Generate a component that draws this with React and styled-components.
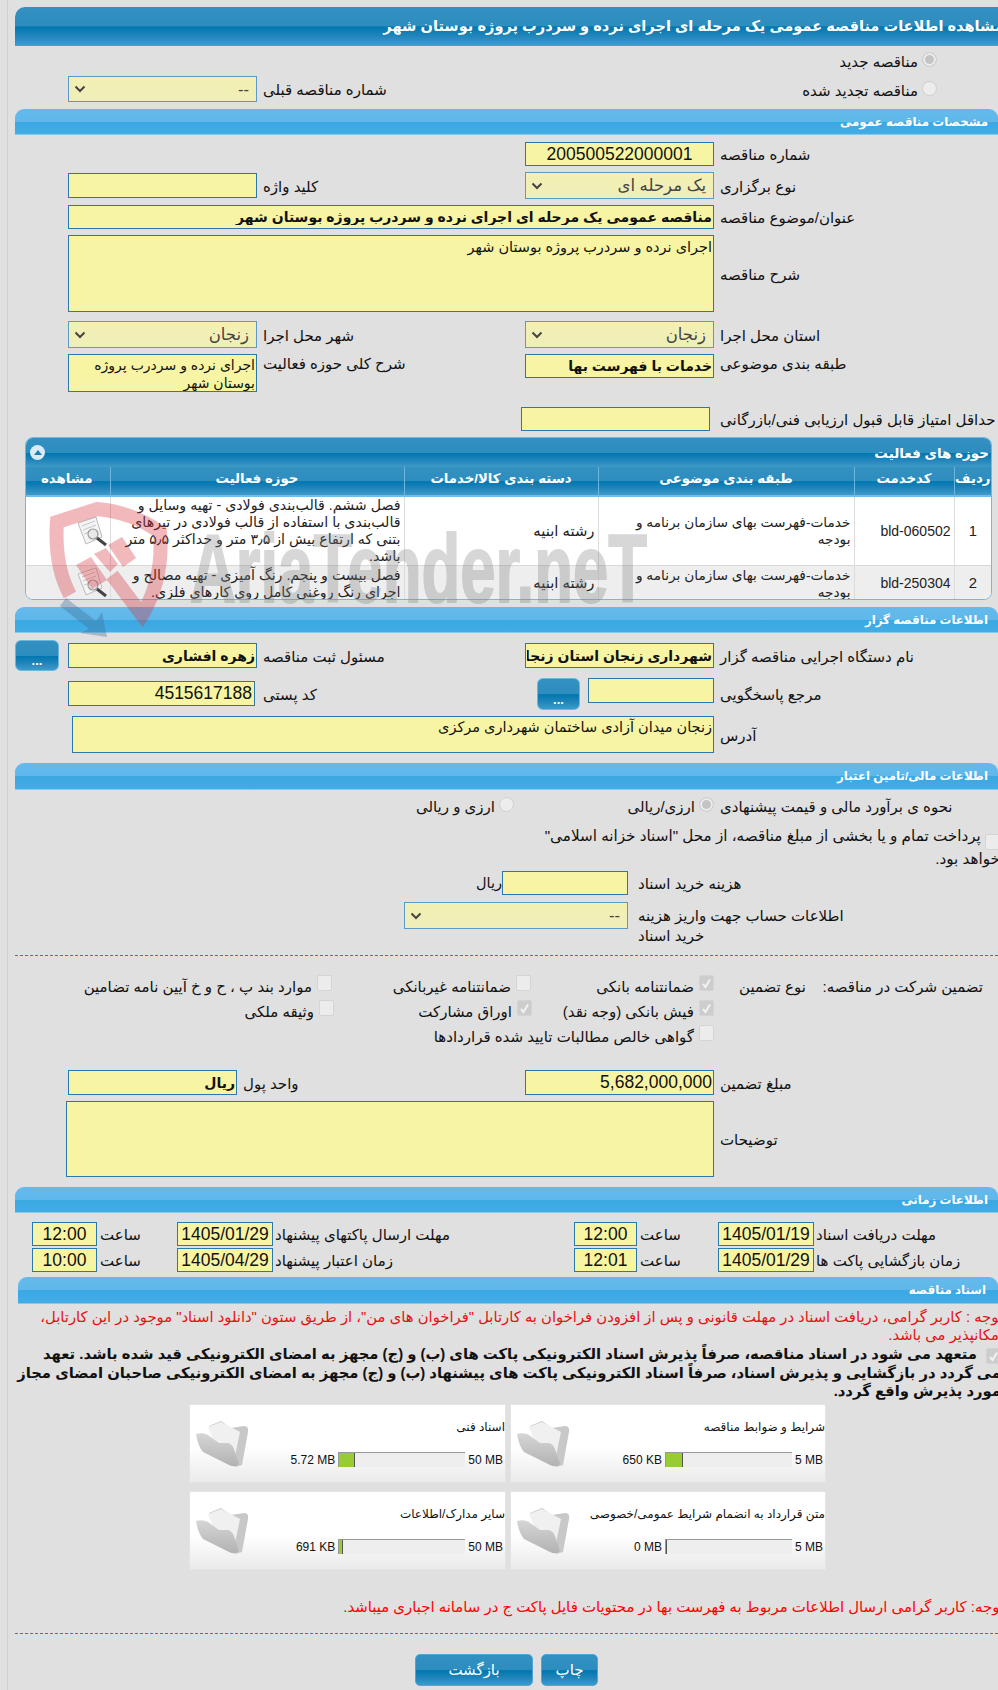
import React from 'react';
import styled, { createGlobalStyle, css } from 'styled-components';

const Global = createGlobalStyle`
  html, body { margin: 0; padding: 0; background: #e0e0e0; }
  * { box-sizing: border-box; }
  body { font-family: "Liberation Sans", "DejaVu Sans", sans-serif; font-size: 15px; color: #111; overflow: hidden; }
`;
const darkBar = css`background: linear-gradient(#3391c1 0, #2d8dbe 50%, #0077b0 52%, #1f84b9 75%, #3f9ac9 100%);`;
const lightBar = css`background: linear-gradient(#64baeb 0, #5fb7ea 50%, #3aa8e3 52%, #43ace5 100%);`;

const Page = styled.div`
  position: relative; width: 998px; height: 1690px; overflow: hidden; padding-left: 8px; direction: rtl; background: #e0e0e0;
`;
const Sheet = styled.div`
  height: 1690px; width: 990px; padding-top: 7px; padding-left: 7px; position: relative;
  box-shadow: -1px 0 0 #cfcfcf;
`;
const TitleBar = styled.div`
  ${darkBar}; height: 39px; border-top-left-radius: 10px; display: flex; align-items: center; overflow: hidden;
  border-bottom: 1px solid #4a9bd0;
  color: #fff; font-weight: bold; font-size: 14.6px; white-space: nowrap;
  span { margin-right: -6px; margin-top: -1px; }
`;
const SectionBar = styled.div`
  ${lightBar}; height: ${p => p.$h || 26}px; border-top-left-radius: 9px; border-top-right-radius: 9px; display: flex; align-items: center; padding-right: ${p => p.$pr || 10}px;
  margin-top: ${p => p.$mt || 0}px; margin-left: ${p => p.$ml || 0}px;
  border-bottom: 1px solid #86c9ef;
  color: #fff; font-weight: bold; font-size: 11.8px;
`;
const Intro = styled.div` height: 63px; padding-top: 6px; `;
const RadioLine = styled.div` display: flex; height: 20px; padding-right: 61px; gap: 4px; font-size: 15px; line-height: 19px; grid-column: ${p => p.$span ? 'span ' + p.$span : 'auto'}; padding-top: ${p => p.$pt || 0}px; `;
const Radio = styled.span`
  flex: none; width: 15px; height: 15px; border-radius: 50%; background: #ededed; border: 1px solid #cfcfcf; margin-top: ${p => p.$mt || 0}px;
  ${p => p.$on && css`box-shadow: inset 0 0 0 2px #ededed; background: #c4c4c4;`}
`;
const Grid = styled.div`
  display: grid; grid-template-columns: ${p => p.$cols || '284px 189px 268px 189px 53px'}; margin-top: ${p => p.$mt || 0}px; height: ${p => p.$h}px;
`;
const Label = styled.label`
  display: flex; align-items: ${p => p.$top ? 'flex-start' : 'center'}; justify-content: flex-end; padding-left: ${p => p.$pl ?? 6}px; white-space: nowrap; font-size: 15px; line-height: 20px;
  padding-top: ${p => p.$top ? 0 : 2}px;
`;
const fieldCss = css`
  display: block; background: #f7f5a3; border: 1px solid #2a78ad; border-radius: 0; padding: 0 1px; margin: 0; color: #111; direction: rtl; outline: none; width: 100%;
  font-family: "Liberation Sans", "DejaVu Sans", sans-serif;
`;
const Input = styled.input`
  ${fieldCss}; height: ${p => p.$h || 24}px; font-size: ${p => p.$fs || 17.5}px; font-weight: ${p => p.$b ? 'bold' : 'normal'};
  text-align: ${p => p.$center ? 'center' : 'right'}; width: ${p => p.$w ? p.$w + 'px' : '100%'};
  margin-top: ${p => p.$mt || 0}px; align-self: start; justify-self: ${p => p.$js || 'stretch'};
  margin-right: ${p => p.$mr || 0}px; padding-right: ${p => p.$pr ?? 1}px; grid-column: ${p => p.$span ? 'span ' + p.$span : 'auto'};
`;
const Area = styled.textarea`
  ${fieldCss}; height: ${p => p.$h}px; resize: none; font-size: ${p => p.$fs || 14.5}px; line-height: ${p => p.$lh || 20}px; overflow: hidden;
  grid-column: ${p => p.$span ? 'span ' + p.$span : 'auto'}; padding-top: ${p => p.$pt ?? 0}px; width: ${p => p.$w ? p.$w + 'px' : '100%'}; justify-self: start;
`;
const Select = styled.div`
  display: flex; align-items: center; justify-content: space-between; height: ${p => p.$h || 27}px; background: linear-gradient(#f2f0b2, #efeeb9); border: 1px solid #5b9ac8; padding: 0 7px 0 5px;
  font-size: 16.5px; color: #444; width: ${p => p.$w ? p.$w + 'px' : '100%'};
`;
const Chevron = () => (
  <svg width="12" height="8" viewBox="0 0 12 8"><path d="M1.5 1.5 L6 6 L10.5 1.5" fill="none" stroke="#444" strokeWidth="2" /></svg>
);
const Panel = styled.div`
  margin: 6px 6px 0 10px; height: 163px; border: 1px solid #7ab6dc; border-radius: 8px; overflow: hidden; background: #fff;
`;
const PanelHead = styled.div`
  ${darkBar}; height: 29px; display: flex; align-items: center; justify-content: space-between; padding: 0 2px 0 4px; color: #fff; font-weight: bold; font-size: 13.5px;
`;
const Toggle = styled.span`
  width: 15px; height: 15px; border-radius: 50%; background: #d9ecf6; display: flex; align-items: center; justify-content: center;
  &::before { content: ""; border: 4px solid transparent; border-bottom: 5px solid #1c7fb4; border-top: 0; }
`;
const Table = styled.table`
  width: 100%; border-collapse: collapse; table-layout: fixed; font-size: 14.8px;
  th { ${darkBar}; height: 29px; color: #fff; font-weight: bold; font-size: 13.3px; border-right: 1px solid #6db7df; border-bottom: 2px solid #6fbde8; padding: 0 0 5px; }
  th:first-child { border-right: 0; }
  td { border-right: 1px solid #dcdcdc; padding: 0 3px; line-height: 17px; color: #222; vertical-align: middle; }
  td:first-child { border-right: 0; text-align: center; }
  tr:nth-child(2) td { background: #eee; border-top: 1px solid #d8d8d8; }
`;
const Row1 = styled.tr` height: 68px; `;
const Row2 = styled.tr` height: 36px; `;
const CodeCell = styled.td` font-size: 14px; text-align: right; `;
const SubjectCell = styled.td` font-size: 13.7px; `;
const ActivityCell = styled.td` font-size: 14.2px; `;
const SmallBtn = styled.button`
  ${darkBar}; border: 1px solid #6bb6e0; border-radius: 6px; color: #fff; font-size: 13px; font-weight: bold; padding: 10px 0 0; width: ${p => p.$w}px; height: ${p => p.$h}px; justify-self: end; font-family: inherit;
`;
const Inline = styled.div` display: flex; gap: 8px; align-items: flex-start; `;
const RadioRow = styled.div` display: grid; grid-template-columns: 284px 200px 200px; margin-top: 7px; height: 20px; `;
const RadioOption = styled.div` display: flex; gap: 4px; font-size: 15px; line-height: 19px; white-space: nowrap; `;
const Check = styled.span`
  flex: none; width: 15px; height: 16px; border-radius: 2px; border: 1px solid #d4d4d4; display: flex; align-items: center; justify-content: center;
  background: ${p => p.$on ? '#cdcdcd' : '#ececec'};
`;
const Tick = () => <svg width="11" height="11" viewBox="0 0 11 11"><path d="M2 6 L4.5 9 L9 1.5" fill="none" stroke="#f2f2f2" strokeWidth="2" /></svg>;
const Para = styled.div`
  margin-top: 10px; margin-right: -2px; height: 36px; line-height: 18px; white-space: nowrap; font-size: 15.2px; display: block;
  ${Check} { display: inline-flex; vertical-align: top; margin-top: 7px; }
`;
const CostRow = styled.div` display: grid; grid-template-columns: 370px 126px auto 1fr; margin-top: 8px; height: 24px; align-items: center; `;
const AccountRow = styled.div` display: grid; grid-template-columns: 370px 224px; margin-top: 7px; height: 27px; `;
const TwoLine = styled.div` text-align: left; padding-left: 10px; line-height: 20px; font-size: 15px; margin-top: 4px; height: 40px; white-space: nowrap;`;
const Rial = styled.span` font-size: 14.5px; `;
const Dashed = styled.div` border-top: 1px dashed #2e7fb0; margin-top: ${p => p.$mt}px; height: 1px; `;
const Guarantee = styled.div` display: grid; grid-template-columns: 284px 183px 200px 1fr; grid-auto-rows: 25px; margin-top: 19px; `;
const GuaranteeHead = styled.div` display: flex; justify-content: space-between; padding: 0 15px 0 25px; line-height: 23px; white-space: nowrap; font-size: 15px; `;
const Option = styled.div` display: flex; gap: 5px; line-height: 23px; white-space: nowrap; font-size: 15px; margin-right: ${p => p.$mr || 0}px; grid-column: ${p => p.$span ? 'span ' + p.$span : 'auto'}; `;
const TimeGrid = styled.div`
  display: grid; grid-template-columns: 184px 96px 81px 63px 301px 96px 80px 65px 17px; grid-auto-rows: 24px; row-gap: 2px; margin-top: 9px;
`;
const Notice = styled.div`
  margin-top: 5px; margin-right: -5px; color: #e31212; line-height: 17.5px; white-space: nowrap; font-size: 14.8px; height: 36px;
`;
const Commit = styled.div`
  margin-top: 0; margin-right: -3px; font-weight: bold; line-height: 18px; white-space: nowrap; font-size: 14.8px; height: 54px;
  ${Check} { display: inline-flex; vertical-align: top; margin-left: 9px; margin-top: 3px; }
`;
const Cards = styled.div` display: grid; grid-template-columns: 316px 317px; gap: 8px 4px; margin: 5px 172px 0 0; `;
const Card = styled.div`
  display: grid; grid-template-columns: 1fr 68px; height: 79px; background: linear-gradient(#fff 55%, #eaeaea 100%); border: 1px solid #e4e4e4;
`;
const CardBody = styled.div` padding: 13px 0 0 3px; `;
const CardTitle = styled.div` font-size: 12px; line-height: 18px; white-space: nowrap; color: #111; `;
const Meter = styled.div` direction: ltr; display: flex; justify-content: flex-end; align-items: center; gap: 2px; margin: 16px 2px 0 0; font-size: 12px; white-space: nowrap; line-height: 14px; `;
const Bar = styled.div` width: 127px; height: 15px; background: #eee; border-top: 1px solid #999; border-left: 1px solid #999; flex: none; margin: 0 1px; `;
const Fill = styled.div` height: 100%; background: #9c3; border-right: 1px solid #555; `;
const FolderWrap = styled.div` padding: 15px 9px 0 4px; `;
const RedNote = styled.div`
  margin-top: 28px; margin-right: -6px; height: 18px; line-height: 18px; color: #f00; font-size: 14.9px; white-space: nowrap;
`;
const Buttons = styled.div` display: flex; gap: 8px; margin: 20px 400px 0 0; `;
const Btn = styled.button`
  ${darkBar}; width: ${p => p.$w}px; height: 32px; border: 1px solid #4ea5d6; border-radius: 5px; color: #fff; font-size: 15px; font-family: inherit; padding: 0;
`;
const Watermark = styled.svg` position: absolute; left: 40px; top: 490px; pointer-events: none; `;

const Folder = () => (
  <svg width="54" height="48" viewBox="0 0 54 48">
    <defs>
      <linearGradient id="fa" x1="0" y1="0" x2="0" y2="1"><stop offset="0" stopColor="#d6d6d6" /><stop offset="1" stopColor="#b2b2b2" /></linearGradient>
    </defs>
    <path d="M14 6 L26 1 L36 8 L49 6 Q54 6 53 12 L47 45 L40 47 Z" fill="#c8c8c8" />
    <path d="M13 7 L26 2 L45 12 L40 36 L20 24 Z" fill="#f0f0f0" />
    <path d="M1 14 Q8 12 13 15 L24 23 L33 23 Q38 24 40 32 L44 44 Q40 48 34 45 L8 32 Q3 26 1 14 Z" fill="url(#fa)" />
  </svg>
);
const DocIcon = ({ y }) => (
  <g transform={`translate(38 ${y})`}>
    <path d="M0 6 L18 0 L24 20 L8 27 Z" fill="#f4f4f4" stroke="#bbb" strokeWidth="1" />
    <path d="M4 9 L17 4 M5 13 L18 8 M6 17 L14 14" stroke="#c4c4c4" strokeWidth="1" />
    <circle cx="15" cy="17" r="5" fill="#e8e8e8" stroke="#999" strokeWidth="1.2" />
    <path d="M19 21 L28 28" stroke="#444" strokeWidth="3" />
  </g>
);
const Mark = () => (
  <Watermark width="620" height="160" viewBox="0 0 620 160">
    <DocIcon y={27} />
    <DocIcon y={78} />
    <g opacity="0.34">
      <path d="M30 105 Q14 75 17 32 L57 19 Q92 22 120 42 Q124 88 102 125 L72 85" fill="none" stroke="#d9363e" strokeWidth="14" />
      <g fill="#d9363e">
        <path d="M68 55 L82 47 L96 68 L83 77 Z" />
        <path d="M36 75 L51 67 L67 90 L52 99 Z" />
        <path d="M54 64 L66 58 L78 74 L70 82 Z" />
      </g>
    </g>
    <path d="M20 116 L26 108 L56 131 L62 122 L67 147 L40 143 L49 139 Z" fill="#3f6f95" opacity="0.36" />
    <text x="150" y="112" fontFamily="Liberation Sans" fontWeight="bold" fontSize="96" fill="#7d7d7d" stroke="#7d7d7d" strokeWidth="2" opacity="0.3" textLength="457" lengthAdjust="spacingAndGlyphs" direction="ltr">AriaTender.neT</text>
  </Watermark>
);

export default function App() {
  return (
    <Page>
      <Global />
      <Sheet>
        <TitleBar><span>مشاهده اطلاعات مناقصه عمومی یک مرحله ای اجرای نرده و سردرب پروژه بوستان شهر</span></TitleBar>
        <Intro>
          <RadioLine><Radio $on /><span>مناقصه جدید</span></RadioLine>
          <Grid $mt={4} $h={26}>
            <RadioLine $span={2} $pt={5}><Radio /><span>مناقصه تجدید شده</span></RadioLine>
            <Label>شماره مناقصه قبلی</Label>
            <Select $h={26}><span>--</span><Chevron /></Select>
          </Grid>
        </Intro>

        <SectionBar>مشخصات مناقصه عمومی</SectionBar>
        <Grid $mt={7} $h={24}>
          <Label>شماره مناقصه</Label><Input readOnly value="200500522000001" $center />
        </Grid>
        <Grid $mt={6} $h={27}>
          <Label>نوع برگزاری</Label>
          <Select><span>یک مرحله ای</span><Chevron /></Select>
          <Label>کلید واژه</Label><Input readOnly $mt={1} $h={25} />
        </Grid>
        <Grid $mt={6} $h={24}>
          <Label>عنوان/موضوع مناقصه</Label>
          <Input readOnly $b $fs={14} $span={3} value="مناقصه عمومی یک مرحله ای اجرای نرده و سردرب پروژه بوستان شهر" />
        </Grid>
        <Grid $mt={6} $h={77}>
          <Label>شرح مناقصه</Label>
          <Area readOnly $h={77} $span={3} $pt={1} value="اجرای نرده و سردرب پروژه بوستان شهر" />
        </Grid>
        <Grid $mt={9} $h={27}>
          <Label>استان محل اجرا</Label>
          <Select><span>زنجان</span><Chevron /></Select>
          <Label>شهر محل اجرا</Label>
          <Select><span>زنجان</span><Chevron /></Select>
        </Grid>
        <Grid $mt={6} $h={38}>
          <Label $top>طبقه بندی موضوعی</Label>
          <Input readOnly $b $fs={14} value="خدمات با فهرست بها" />
          <Label $top>شرح کلی حوزه فعالیت</Label>
          <Area readOnly $h={38} $lh={18} $fs={14} $pt={1} value="اجرای نرده و سردرب پروژه بوستان شهر" />
        </Grid>
        <Grid $mt={15} $h={24}>
          <Label>حداقل امتیاز قابل قبول ارزیابی فنی/بازرگانی</Label>
          <Input readOnly $mr={4} />
        </Grid>

        <Panel>
          <PanelHead><span>حوزه های فعالیت</span><Toggle /></PanelHead>
          <Table>
            <colgroup><col width="37" /><col width="100" /><col width="256" /><col width="194" /><col width="294" /><col width="86" /></colgroup>
            <thead><tr><th>ردیف</th><th>کدخدمت</th><th>طبقه بندی موضوعی</th><th>دسته بندی کالا/خدمات</th><th>حوزه فعالیت</th><th>مشاهده</th></tr></thead>
            <tbody>
              <Row1>
                <td>1</td><CodeCell>bld-060502</CodeCell>
                <SubjectCell>خدمات-فهرست بهای سازمان برنامه و بودجه</SubjectCell>
                <td>رشته ابنیه</td>
                <ActivityCell>فصل ششم. قالب‌بندی فولادی - تهیه وسایل و قالب‌بندی با استفاده از قالب فولادی در تیرهای بتنی که ارتفاع بیش از ۳٫۵ متر و حداکثر ۵٫۵ متر باشد.</ActivityCell>
                <td />
              </Row1>
              <Row2>
                <td>2</td><CodeCell>bld-250304</CodeCell>
                <SubjectCell>خدمات-فهرست بهای سازمان برنامه و بودجه</SubjectCell>
                <td>رشته ابنیه</td>
                <ActivityCell>فصل بیست و پنجم. رنگ آمیزی - تهیه مصالح و اجرای رنگ روغنی کامل روی کارهای فلزی.</ActivityCell>
                <td />
              </Row2>
            </tbody>
          </Table>
        </Panel>

        <SectionBar $mt={7}>اطلاعات مناقصه گزار</SectionBar>
        <Grid $mt={7} $h={31}>
          <Label>نام دستگاه اجرایی مناقصه گزار</Label>
          <Input readOnly $b $fs={14} $mt={3} $h={25} value="شهرداری زنجان استان زنجان" />
          <Label>مسئول ثبت مناقصه</Label>
          <Input readOnly $b $fs={14} $mt={3} $h={25} value="زهره افشاری" />
          <SmallBtn $w={44} $h={31}>...</SmallBtn>
        </Grid>
        <Grid $mt={7} $h={32}>
          <Label>مرجع پاسخگویی</Label>
          <Inline><Input readOnly $w={126} $h={25} /><SmallBtn $w={43} $h={32}>...</SmallBtn></Inline>
          <Label>کد پستی</Label>
          <Input readOnly $mt={3} $h={25} $w={187} $js="end" $pr={2} value="4515617188" />
        </Grid>
        <Grid $mt={6} $h={37}>
          <Label>آدرس</Label>
          <Area readOnly $h={37} $w={642} $span={3} value="زنجان میدان آزادی ساختمان شهرداری مرکزی" />
        </Grid>

        <SectionBar $mt={10} $h={27}>اطلاعات مالی/تامین اعتبار</SectionBar>
        <RadioRow>
          <Label $top>نحوه ی برآورد مالی و قیمت پیشنهادی</Label>
          <RadioOption><Radio $on />ارزی/ریالی</RadioOption>
          <RadioOption><Radio />ارزی و ریالی</RadioOption>
        </RadioRow>
        <Para><Check /> پرداخت تمام و یا بخشی از مبلغ مناقصه، از محل "اسناد خزانه اسلامی"<br />خواهد بود.</Para>
        <CostRow>
          <Label $pl={10}>هزینه خرید اسناد</Label>
          <Input readOnly />
          <Rial>ریال</Rial>
        </CostRow>
        <AccountRow>
          <TwoLine>اطلاعات حساب جهت واریز هزینه<br />خرید اسناد</TwoLine>
          <Select><span>--</span><Chevron /></Select>
        </AccountRow>
        <Dashed $mt={26} />
        <Guarantee>
          <GuaranteeHead><span>تضمین شرکت در مناقصه:</span><span>نوع تضمین</span></GuaranteeHead>
          <Option><Check $on><Tick /></Check>ضمانتنامه بانکی</Option>
          <Option><Check />ضمانتنامه غیربانکی</Option>
          <Option $mr={-1}><Check />موارد بند پ ، ح و خ آیین نامه تضامین</Option>
          <div />
          <Option><Check $on><Tick /></Check>فیش بانکی (وجه نقد)</Option>
          <Option $mr={-1}><Check $on><Tick /></Check>اوراق مشارکت</Option>
          <Option $mr={-3}><Check />وثیقه ملکی</Option>
          <div />
          <Option $span={2}><Check />گواهی خالص مطالبات تایید شده قراردادها</Option>
        </Guarantee>
        <Grid $mt={20} $h={25} $cols="284px 189px 288px 169px 53px">
          <Label>مبلغ تضمین</Label>
          <Input readOnly $h={25} value="5,682,000,000" />
          <Label>واحد پول</Label>
          <Input readOnly $b $fs={14} $h={25} value="ریال" />
        </Grid>
        <Grid $mt={6} $h={76}>
          <Label>توضیحات</Label>
          <Area readOnly $h={76} $w={648} $span={4} />
        </Grid>

        <SectionBar $mt={10}>اطلاعات زمانی</SectionBar>
        <TimeGrid>
          <Label $pl={2}>مهلت دریافت اسناد</Label><Input readOnly $center value="1405/01/19" />
          <Label $pl={3}>ساعت</Label><Input readOnly $center value="12:00" />
          <Label $pl={2}>مهلت ارسال پاکتهای پیشنهاد</Label><Input readOnly $center value="1405/01/29" />
          <Label $pl={3}>ساعت</Label><Input readOnly $center value="12:00" />
          <div />
          <Label $pl={2}>زمان بازگشایی پاکت ها</Label><Input readOnly $center value="1405/01/29" />
          <Label $pl={3}>ساعت</Label><Input readOnly $center value="12:01" />
          <Label $pl={2}>زمان اعتبار پیشنهاد</Label><Input readOnly $center value="1405/04/29" />
          <Label $pl={3}>ساعت</Label><Input readOnly $center value="10:00" />
        </TimeGrid>

        <SectionBar $mt={5} $ml={3} $h={27} $pr={12}>اسناد مناقصه</SectionBar>
        <Notice>توجه : کاربر گرامی، دریافت اسناد در مهلت قانونی و پس از افزودن فراخوان به کارتابل "فراخوان های من"، از طریق ستون "دانلود اسناد" موجود در این کارتابل،<br />امکانپذیر می باشد.</Notice>
        <Commit><Check $on><Tick /></Check>متعهد می شود در اسناد مناقصه، صرفاً پذیرش اسناد الکترونیکی پاکت های (ب) و (ج) مجهز به امضای الکترونیکی قید شده باشد. تعهد<br />می گردد در بازگشایی و پذیرش اسناد، صرفاً اسناد الکترونیکی پاکت های پیشنهاد (ب) و (ج) مجهز به امضای الکترونیکی صاحبان امضای مجاز<br />مورد پذیرش واقع گردد.</Commit>
        <Cards>
          {[
            ['شرایط و ضوابط مناقصه', '650 KB', '5 MB', 17],
            ['اسناد فنی', '5.72 MB', '50 MB', 16],
            ['متن قرارداد به انضمام شرایط عمومی/خصوصی', '0 MB', '5 MB', 1],
            ['سایر مدارک/اطلاعات', '691 KB', '50 MB', 4],
          ].map(([t, a, b, w]) => (
            <Card key={t}>
              <CardBody>
                <CardTitle>{t}</CardTitle>
                <Meter>{a}<Bar><Fill style={{ width: w }} /></Bar>{b}</Meter>
              </CardBody>
              <FolderWrap><Folder /></FolderWrap>
            </Card>
          ))}
        </Cards>
        <RedNote>توجه: کاربر گرامی ارسال اطلاعات مربوط به فهرست بها در محتویات فایل پاکت ج در سامانه اجباری میباشد.</RedNote>
        <Dashed $mt={17} />
        <Buttons>
          <Btn $w={57}>چاپ</Btn>
          <Btn $w={118}>بازگشت</Btn>
        </Buttons>
      </Sheet>
      <Mark />
    </Page>
  );
}
